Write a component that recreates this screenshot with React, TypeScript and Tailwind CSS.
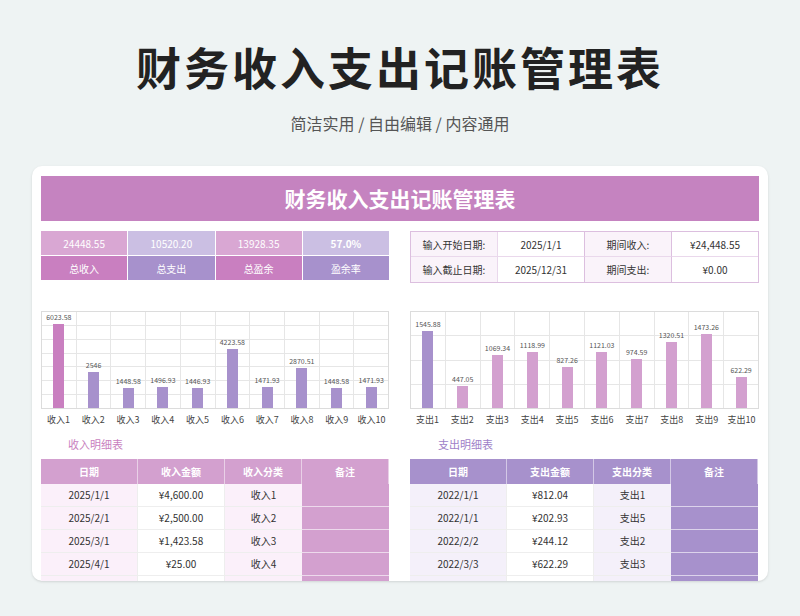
import React from "react";

const F = { fontFamily: '"Noto Sans CJK SC","Noto Sans",sans-serif' };

const inc = [6023.58, 2546, 1448.58, 1496.93, 1446.93, 4223.58, 1471.93, 2870.51, 1448.58, 1471.93];
const exp = [1545.88, 447.05, 1069.34, 1118.99, 827.26, 1121.03, 974.59, 1320.51, 1473.26, 622.29];

function Chart({ data, max, lines, prefix, first, rest }: { data: number[]; max: number; lines: number; prefix: string; first: string; rest: string }) {
  return (
    <div className="flex flex-col">
      <div className="relative h-[98px] border border-[#dcdcdc] flex">
        <div className="absolute inset-0 flex flex-col">
          {Array.from({ length: lines }).map((_, i) => (
            <div key={i} className="flex-1 border-b border-[#e6e6e6] last:border-b-0" />
          ))}
        </div>
        {data.map((v, i) => (
          <div key={i} className="relative flex-1 border-r border-[#e6e6e6] last:border-r-0 flex flex-col justify-end items-center">
            <div className="text-[7px] text-[#555] leading-none mb-[3px] whitespace-nowrap">{v}</div>
            <div className="w-[11px]" style={{ height: (v / max) * 98, background: i === 0 ? first : rest }} />
          </div>
        ))}
      </div>
      <div className="flex mt-[4px]">
        {data.map((_, i) => (
          <div key={i} className="flex-1 text-center text-[9px] text-[#444]">{prefix}{i + 1}</div>
        ))}
      </div>
    </div>
  );
}

function Table({ head, rows, hc, rowbg, remark }: { head: string[]; rows: string[][]; hc: string; rowbg: string; remark: string }) {
  return (
    <div className="grid grid-cols-[97px_87px_77px_87px] text-[10px]">
      {head.map((h, i) => (
        <div key={i} className="h-[25px] flex items-center justify-center text-white font-bold border-r border-white/50" style={{ background: hc }}>{h}</div>
      ))}
      {rows.map((r, ri) => (
        <React.Fragment key={ri}>
          <div className="h-[23px] flex items-center justify-center text-[#333] border-b border-[#eee] border-r border-[#e8d8ea]" style={{ background: rowbg }}>{r[0]}</div>
          <div className="h-[23px] flex items-center justify-center text-[#333] bg-white border-b border-[#eee] border-r border-[#e0c8e4]">{r[1]}</div>
          <div className="h-[23px] flex items-center justify-center text-[#333] border-b border-[#eee]" style={{ background: rowbg }}>{r[2]}</div>
          <div className="h-[23px] border-b border-white/60" style={{ background: remark }} />
        </React.Fragment>
      ))}
    </div>
  );
}

export default function App() {
  const kpi = [
    ["24448.55", "总收入", "#d9a7d3", "#c97fc0"],
    ["10520.20", "总支出", "#cbbfe3", "#a791cc"],
    ["13928.35", "总盈余", "#d9a7d3", "#c97fc0"],
    ["57.0%", "盈余率", "#cbbfe3", "#a791cc"],
  ];
  return (
    <div className="w-[800px] h-[616px] bg-[#eef3f3] overflow-hidden flex flex-col items-center" style={F}>
      <div className="mt-[37px] text-[45px] font-bold text-[#222] leading-[60px] tracking-[3px]">财务收入支出记账管理表</div>
      <div className="mt-[14px] text-[16px] text-[#555] leading-[24px]">简洁实用 / 自由编辑 / 内容通用</div>
      <div className="mt-[31px] w-[736px] h-[415px] bg-white rounded-[10px] overflow-hidden px-[9px] pt-[10px] shadow-sm">
        <div className="h-[45px] bg-[#c583c0] flex items-center justify-center text-white text-[21px] font-bold">财务收入支出记账管理表</div>
        <div className="flex justify-between mt-[10px]">
          <div className="grid grid-cols-4 w-[348px] gap-x-[1px]">
            {kpi.map((k, i) => (
              <div key={i} className="flex flex-col gap-y-[1px]">
                <div className={`h-[24px] flex items-center justify-center text-[10px] text-white ${i === 3 ? "font-bold" : ""}`} style={{ background: k[2] }}>{k[0]}</div>
                <div className="h-[24px] flex items-center justify-center text-[10px] text-white" style={{ background: k[3] }}>{k[1]}</div>
              </div>
            ))}
          </div>
          <div className="w-[349px] border border-[#dcbfdf] grid grid-cols-[87px_87px_87px_86px] text-[10px] text-[#333]">
            {[["输入开始日期:", "2025/1/1", "期间收入:", "¥24,448.55"], ["输入截止日期:", "2025/12/31", "期间支出:", "¥0.00"]].map((r, ri) => (
              <React.Fragment key={ri}>
                <div className={`h-[25px] flex items-center justify-center bg-[#faf3fa] border-r border-[#ead8ec] ${ri === 0 ? "border-b" : ""}`}>{r[0]}</div>
                <div className={`h-[25px] flex items-center justify-center border-r border-[#dcbfdf] ${ri === 0 ? "border-b border-b-[#ead8ec]" : ""}`}>{r[1]}</div>
                <div className={`h-[25px] flex items-center justify-center bg-[#faf3fa] border-r border-[#dcbfdf] ${ri === 0 ? "border-b border-b-[#ead8ec]" : ""}`}>{r[2]}</div>
                <div className={`h-[25px] flex items-center justify-center ${ri === 0 ? "border-b border-[#ead8ec]" : ""}`}>{r[3]}</div>
              </React.Fragment>
            ))}
          </div>
        </div>
        <div className="flex justify-between mt-[28px]">
          <div className="w-[348px]"><Chart data={inc} max={7000} lines={7} prefix="收入" first="#c97fc0" rest="#a791cc" /></div>
          <div className="w-[349px]"><Chart data={exp} max={1960} lines={4} prefix="支出" first="#a791cc" rest="#d3a0cf" /></div>
        </div>
        <div className="flex justify-between mt-[8px]">
          <div className="w-[348px]">
            <div className="text-[11px] text-[#c97fc0] pl-[27px] h-[18px] leading-[18px]">收入明细表</div>
            <div className="mt-[6px]">
              <Table head={["日期", "收入金额", "收入分类", "备注"]} hc="#d3a0cf" rowbg="#fbf0fa" remark="#d3a0cf"
                rows={[["2025/1/1", "¥4,600.00", "收入1"], ["2025/2/1", "¥2,500.00", "收入2"], ["2025/3/1", "¥1,423.58", "收入3"], ["2025/4/1", "¥25.00", "收入4"], ["", "", ""]]} />
            </div>
          </div>
          <div className="w-[349px]">
            <div className="text-[11px] text-[#a07fc8] pl-[28px] h-[18px] leading-[18px]">支出明细表</div>
            <div className="mt-[6px]">
              <Table head={["日期", "支出金额", "支出分类", "备注"]} hc="#a791cc" rowbg="#f4f0fa" remark="#a791cc"
                rows={[["2022/1/1", "¥812.04", "支出1"], ["2022/1/1", "¥202.93", "支出5"], ["2022/2/2", "¥244.12", "支出2"], ["2022/3/3", "¥622.29", "支出3"], ["", "", ""]]} />
            </div>
          </div>
        </div>
      </div>
    </div>
  );
}
